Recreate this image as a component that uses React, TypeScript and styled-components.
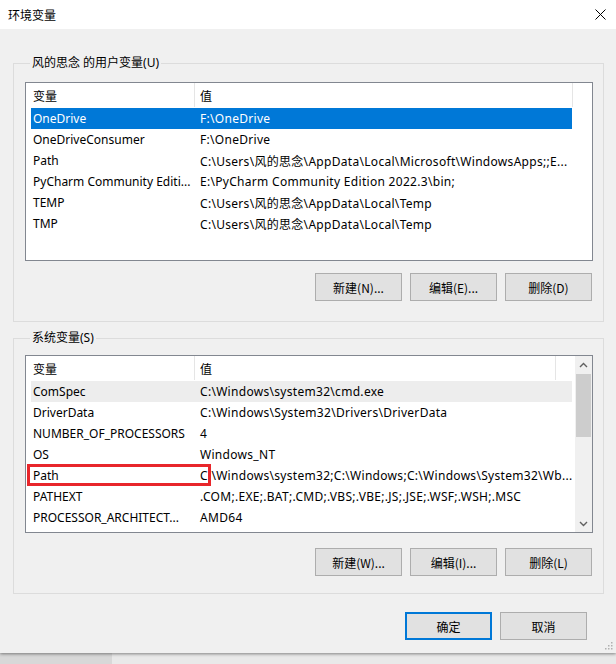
import React from "react";
import styled, { createGlobalStyle } from "styled-components";

const GlobalStyle = createGlobalStyle`
  html, body { margin: 0; padding: 0; }
  body {
    background: #e9e9e9;
    font-family: "Segoe UI", "Noto Sans", "Noto Sans CJK SC", sans-serif;
    font-size: 12px;
    color: #000;
    overflow: hidden;
  }
`;

const Page = styled.div`
  width: 616px;
  height: 664px;
  display: flex;
  flex-direction: column;
`;

const Dialog = styled.div`
  position: relative;
  height: 653px;
  display: flex;
  flex-direction: column;
  background: #f0f0f0;
  box-shadow: 0 1px 3px rgba(0, 0, 0, 0.45);
  z-index: 1;
`;

const TitleBar = styled.div`
  height: 29px;
  flex: none;
  background: #fff;
  display: flex;
  align-items: center;
  justify-content: space-between;
  padding: 0 10px 0 8px;
  font-family: "Noto Sans CJK SC", sans-serif;
  font-size: 12px;
`;

const Body = styled.div`
  flex: 1;
  display: flex;
  flex-direction: column;
  padding: 26px 12px 0 13px;
`;

const Group = styled.fieldset<{ $pt: number; $pb: number; $mt?: number }>`
  margin: ${(p) => p.$mt ?? 0}px 0 0 0;
  padding: ${(p) => p.$pt}px 10px ${(p) => p.$pb}px 11px;
  border: 1px solid #dcdcdc;
  min-width: 0;
  display: flex;
  flex-direction: column;
`;

const Legend = styled.legend`
  padding: 0 2px;
  margin-left: 5px;
  line-height: 16px;
  font-family: "Segoe UI", "Noto Sans", "Noto Sans CJK SC", sans-serif;
  font-size: 12px;
  color: #000;
`;

const ListBox = styled.div<{ $h: number }>`
  position: relative;
  height: ${(p) => p.$h}px;
  border: 1px solid #828790;
  background: #fff;
  display: flex;
  overflow: hidden;
`;

const ListInner = styled.div`
  flex: 1;
  display: flex;
  flex-direction: column;
  padding-left: 5px;
`;

const HeaderRow = styled.div`
  height: 24px;
  display: flex;
  margin-bottom: 1px;
`;

const HeaderCell = styled.div<{ $w?: number }>`
  ${(p) => (p.$w ? `width: ${p.$w}px; flex: none;` : "flex: 1;")}
  padding-left: ${(p) => (p.$w ? 2 : 5)}px;
  border-right: 1px solid #e5e5e5;
  display: flex;
  align-items: center;
  font-family: "Noto Sans CJK SC", sans-serif;
  font-size: 12px;
  box-sizing: border-box;
`;

const HeaderFill = styled.div`
  width: 19px;
  flex: none;
`;

const Row = styled.div<{ $sel?: boolean; $hover?: boolean }>`
  position: relative;
  height: 21px;
  width: 541px;
  display: flex;
  align-items: center;
  background: ${(p) => (p.$sel ? "#0078d7" : p.$hover ? "#ededed" : "transparent")};
  color: ${(p) => (p.$sel ? "#fff" : "#000")};
  white-space: nowrap;
`;

const Cell = styled.div<{ $w?: number }>`
  ${(p) => (p.$w ? `width: ${p.$w}px; flex: none;` : "flex: 1; min-width: 0;")}
  padding-left: ${(p) => (p.$w ? 2 : 5)}px;
  box-sizing: border-box;
  overflow: hidden;
  white-space: nowrap;
  font-size: 12px;
  letter-spacing: ${(p) => (p.$w ? "0" : "0.3px")};
`;

const Highlight = styled.div`
  position: absolute;
  left: -4px;
  top: -1px;
  width: 184px;
  height: 22px;
  border: 3px solid #e8262b;
  box-sizing: border-box;
  pointer-events: none;
`;

const ScrollBar = styled.div`
  width: 17px;
  flex: none;
  background: #f0f0f0;
  display: flex;
  flex-direction: column;
  align-items: center;
`;

const ScrollArrow = styled.div`
  height: 17px;
  width: 17px;
  display: flex;
  align-items: center;
  justify-content: center;
`;

const ScrollThumb = styled.div`
  margin-top: 1px;
  width: 15px;
  height: 63px;
  background: #cdcdcd;
`;

const ScrollTrack = styled.div`
  flex: 1;
`;

const ButtonRow = styled.div<{ $top: number }>`
  display: flex;
  justify-content: flex-end;
  gap: 8px;
  margin-top: ${(p) => p.$top}px;
  padding-right: 1px;
`;

const Button = styled.button<{ $default?: boolean }>`
  width: 87px;
  height: 28px;
  margin: 0;
  padding: 0;
  background: #e1e1e1;
  border: 1px solid ${(p) => (p.$default ? "#0078d7" : "#adadad")};
  box-shadow: ${(p) => (p.$default ? "inset 0 0 0 1px #0078d7" : "none")};
  font-family: "Noto Sans CJK SC", sans-serif;
  font-size: 12px;
  color: #000;
`;

const Footer = styled.div`
  display: flex;
  justify-content: flex-end;
  gap: 8px;
  margin-top: 18px;
  padding-right: 17px;
`;

const Grip = styled.svg`
  position: absolute;
  right: 3px;
  bottom: 3px;
`;

const Below = styled.div`
  flex: 1;
  display: flex;
`;

const BelowLeft = styled.div`
  width: 112px;
  background: #d8d8d8;
`;

const userVars: [string, string][] = [
  ["OneDrive", "F:\\OneDrive"],
  ["OneDriveConsumer", "F:\\OneDrive"],
  ["Path", "C:\\Users\\风的思念\\AppData\\Local\\Microsoft\\WindowsApps;;E..."],
  ["PyCharm Community Editi...", "E:\\PyCharm Community Edition 2022.3\\bin;"],
  ["TEMP", "C:\\Users\\风的思念\\AppData\\Local\\Temp"],
  ["TMP", "C:\\Users\\风的思念\\AppData\\Local\\Temp"],
];

const sysVars: [string, string][] = [
  ["ComSpec", "C:\\Windows\\system32\\cmd.exe"],
  ["DriverData", "C:\\Windows\\System32\\Drivers\\DriverData"],
  ["NUMBER_OF_PROCESSORS", "4"],
  ["OS", "Windows_NT"],
  ["Path", "C:\\Windows\\system32;C:\\Windows;C:\\Windows\\System32\\Wb..."],
  ["PATHEXT", ".COM;.EXE;.BAT;.CMD;.VBS;.VBE;.JS;.JSE;.WSF;.WSH;.MSC"],
  ["PROCESSOR_ARCHITECT...", "AMD64"],
];

const Header = () => (
  <HeaderRow>
    <HeaderCell $w={164}>变量</HeaderCell>
    <HeaderCell>值</HeaderCell>
    <HeaderFill />
  </HeaderRow>
);

const Chevron = ({ up }: { up?: boolean }) => (
  <svg width="9" height="6" viewBox="0 0 9 6">
    <path
      d={up ? "M1 5 L4.5 1.5 L8 5" : "M1 1 L4.5 4.5 L8 1"}
      fill="none"
      stroke="#606060"
      strokeWidth="1.4"
    />
  </svg>
);

export default function App() {
  return (
    <Page>
      <GlobalStyle />
      <Dialog>
        <TitleBar>
          <span>环境变量</span>
          <svg width="11" height="11" viewBox="0 0 11 11">
            <path d="M0.5 0.5 L10.5 10.5 M10.5 0.5 L0.5 10.5" stroke="#000" strokeWidth="1" />
          </svg>
        </TitleBar>
        <Body>
          <Group $pt={11} $pb={20}>
            <Legend>风的思念 的用户变量(U)</Legend>
            <ListBox $h={177}>
              <ListInner>
                <Header />
                {userVars.map(([k, v], i) => (
                  <Row key={k + i} $sel={i === 0}>
                    <Cell $w={164}>{k}</Cell>
                    <Cell>{v}</Cell>
                  </Row>
                ))}
              </ListInner>
            </ListBox>
            <ButtonRow $top={12}>
              <Button>新建(N)...</Button>
              <Button>编辑(E)...</Button>
              <Button>删除(D)</Button>
            </ButtonRow>
          </Group>
          <Group $pt={9} $pb={17} $mt={8}>
            <Legend>系统变量(S)</Legend>
            <ListBox $h={176}>
              <ListInner>
                <Header />
                {sysVars.map(([k, v], i) => (
                  <Row key={k + i} $hover={i === 0}>
                    <Cell $w={164}>{k}</Cell>
                    <Cell>{v}</Cell>
                    {k === "Path" && <Highlight />}
                  </Row>
                ))}
              </ListInner>
              <ScrollBar>
                <ScrollArrow>
                  <Chevron up />
                </ScrollArrow>
                <ScrollThumb />
                <ScrollTrack />
                <ScrollArrow>
                  <Chevron />
                </ScrollArrow>
              </ScrollBar>
            </ListBox>
            <ButtonRow $top={15}>
              <Button>新建(W)...</Button>
              <Button>编辑(I)...</Button>
              <Button>删除(L)</Button>
            </ButtonRow>
          </Group>
          <Footer>
            <Button $default>确定</Button>
            <Button>取消</Button>
          </Footer>
        </Body>
        <Grip width="8" height="8" viewBox="0 0 8 8">
          <rect x="6" y="0" width="1.5" height="1.5" fill="#b0b0b0" />
          <rect x="3" y="3" width="1.5" height="1.5" fill="#b0b0b0" />
          <rect x="6" y="3" width="1.5" height="1.5" fill="#b0b0b0" />
          <rect x="0" y="6" width="1.5" height="1.5" fill="#b0b0b0" />
          <rect x="3" y="6" width="1.5" height="1.5" fill="#b0b0b0" />
          <rect x="6" y="6" width="1.5" height="1.5" fill="#b0b0b0" />
        </Grip>
      </Dialog>
      <Below>
        <BelowLeft />
      </Below>
    </Page>
  );
}
